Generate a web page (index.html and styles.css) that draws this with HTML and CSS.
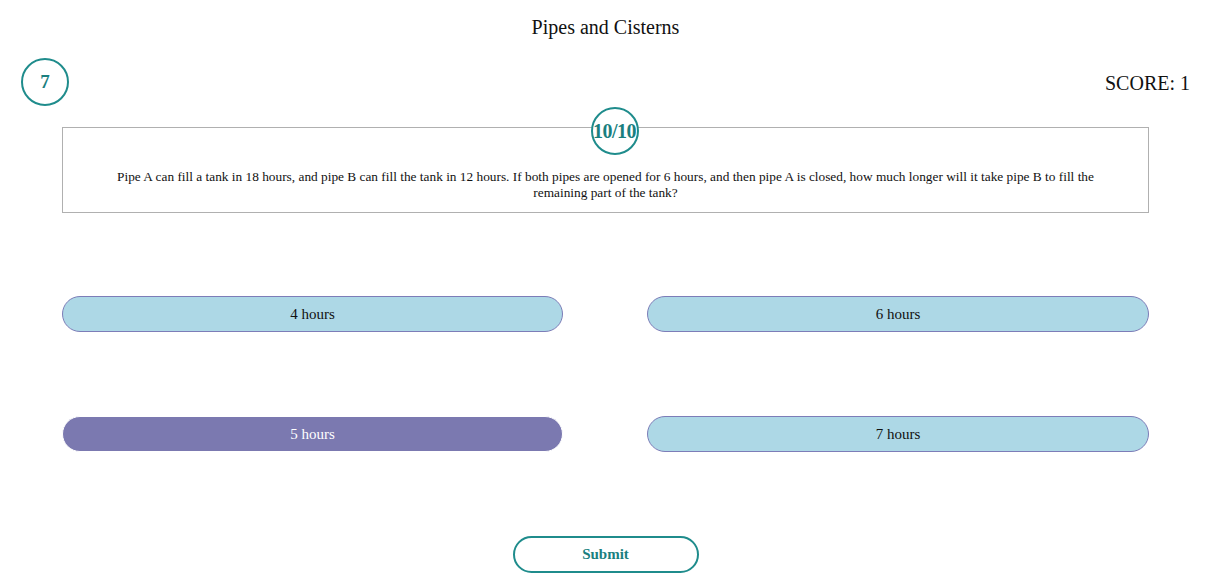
FILE: index.html
```html
<!DOCTYPE html>
<html lang="en">
<head>
<meta charset="utf-8">
<title>Pipes and Cisterns</title>
<link rel="stylesheet" href="styles.css">
</head>
<body>
<h1 class="title">Pipes and Cisterns</h1>
<div class="top-row">
  <div class="timer">7</div>
  <div class="score">SCORE: 1</div>
</div>
<div class="question-card">
  <div class="q-count">10/10</div>
  <p class="question">Pipe A can fill a tank in 18 hours, and pipe B can fill the tank in 12 hours. If both pipes are opened for 6 hours, and then pipe A is closed, how much longer will it take pipe B to fill the remaining part of the tank?</p>
</div>
<div class="options">
  <button class="option">4 hours</button>
  <button class="option">6 hours</button>
  <button class="option selected">5 hours</button>
  <button class="option">7 hours</button>
</div>
<div class="submit-row">
  <button class="submit">Submit</button>
</div>
</body>
</html>
```
FILE: styles.css
```css
html, body {
  margin: 0;
  padding: 0;
  background: #ffffff;
  font-family: "Liberation Serif", "Times New Roman", serif;
  color: #111;
}
.title {
  margin: 0;
  padding-top: 16px;
  font-size: 20px;
  font-weight: normal;
  line-height: 23px;
  text-align: center;
  padding-left: 6px;
}
.top-row {
  display: flex;
  justify-content: space-between;
  align-items: center;
  padding: 0 15px 0 21px;
  margin-top: 19px;
}
.timer {
  width: 44px;
  height: 44px;
  border: 2px solid #1f8c8c;
  border-radius: 50%;
  display: flex;
  align-items: center;
  justify-content: center;
  color: #1a7f7f;
  font-weight: bold;
  font-size: 19px;
}
.score {
  font-size: 20px;
  padding-top: 2px;
}
.question-card {
  position: relative;
  margin: 21px 56px 0 62px;
  border: 1px solid #b0b0b0;
  padding: 41px 46px 11px;
  height: 32px;
}
.q-count {
  position: absolute;
  top: -21px;
  left: 50%;
  margin-left: -15px;
  width: 44px;
  height: 44px;
  border: 2px solid #1f8c8c;
  border-radius: 50%;
  background: #fff;
  display: flex;
  align-items: center;
  justify-content: center;
  color: #1a7f7f;
  font-weight: bold;
  font-size: 20px;
  letter-spacing: -0.5px;
  line-height: 1;
}
.question {
  margin: 0;
  font-size: 13.33px;
  line-height: 16px;
  text-align: center;
}
.options {
  display: grid;
  grid-template-columns: 501px 502px;
  column-gap: 84px;
  row-gap: 84px;
  margin: 83px 0 0 62px;
}
.option {
  height: 36px;
  border: 1px solid #7d7db8;
  border-radius: 18px;
  background: #add8e6;
  font-family: "Liberation Serif", "Times New Roman", serif;
  font-size: 15px;
  color: #111;
  padding: 0;
}
.option.selected {
  background: #7b79b0;
  border-color: #ffffff;
  color: #ffffff;
}
.submit-row {
  display: flex;
  justify-content: center;
  margin-top: 84px;
  padding-left: 6px;
}
.submit {
  width: 186px;
  height: 37px;
  border: 2px solid #1f8c8c;
  border-radius: 19px;
  background: #fff;
  color: #1a7f7f;
  font-family: "Liberation Serif", "Times New Roman", serif;
  font-weight: bold;
  font-size: 15px;
}
```
